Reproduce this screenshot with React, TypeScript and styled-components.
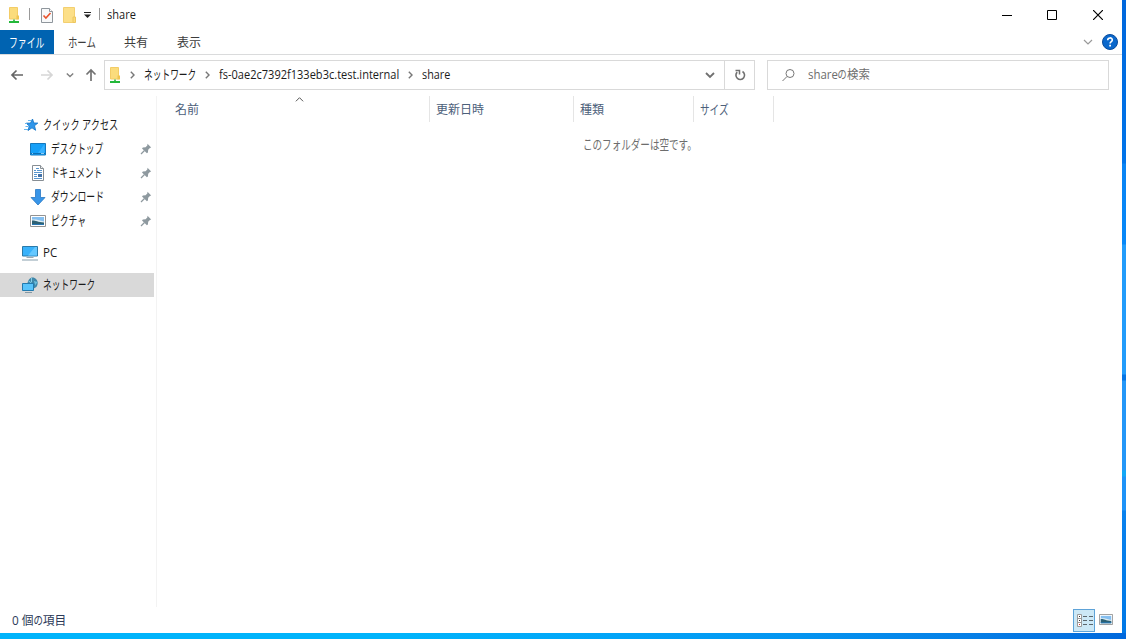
import React from "react";
import styled, { createGlobalStyle } from "styled-components";

const Global = createGlobalStyle`
  * { box-sizing: border-box; }
  body {
    margin: 0;
    overflow: hidden;
    font-family: "Open Sans", "Noto Sans CJK JP", sans-serif;
    font-size: 12px;
    color: #1b1b1b;
  }
  svg { display: block; flex: none; }
`;

const Desktop = styled.div`
  display: grid;
  grid-template: 633px 6px / 1122px 4px;
  width: 1126px;
  height: 639px;
`;

const Window = styled.main`
  display: flex;
  flex-direction: column;
  background: #fff;
  min-width: 0;
`;

const RightEdge = styled.div`
  background: linear-gradient(
    #0067dc 0, #006fe4 100px, #0074ea 163px, #0a84f4 164px, #0788f8 244px,
    #229cfb 245px, #229cfb 374px, #0575e4 375px, #0575e4 380px,
    #2497f8 381px, #2497f8 470px, #12a8f6 471px, #12a8f6 476px,
    #1e93f8 477px, #1e93f8 510px, #0a82ee 511px, #0078e6 100%
  );
`;

const BottomEdge = styled.div`
  grid-column: 1 / 3;
  background: linear-gradient(90deg, #00b4fb 0, #00b4fb 400px, #02a4f8 620px, #0494f0 800px, #067ee6 980px, #0068dc 100%);
`;

const Label = styled.span<{ $w: number; $scale?: number; $color?: string; $size?: number; $rise?: number }>`
  flex: none;
  width: ${(p) => p.$w}px;
  height: 16px;
  line-height: 16px;
  font-size: ${(p) => p.$size ?? 12}px;
  white-space: pre;
  color: ${(p) => p.$color ?? "inherit"};
  transform: translateY(${(p) => p.$rise ?? 0}px) scaleX(${(p) => p.$scale ?? 1});
  transform-origin: left center;
`;

const Kana = styled.span<{ $w: number; $scale: number }>`
  display: inline-block;
  width: ${(p) => p.$w}px;
  transform: scaleX(${(p) => p.$scale});
  transform-origin: left center;
`;

const Spacer = styled.i<{ $w: number }>`
  flex: none;
  width: ${(p) => p.$w}px;
`;

const TitleBar = styled.header`
  display: flex;
  align-items: center;
  height: 30px;
  padding-left: 7px;
  > svg:first-child { margin-top: -1px; }
`;

const Separator = styled.i<{ $gap: string }>`
  width: 1px;
  height: 12px;
  margin: ${(p) => p.$gap};
  margin-top: -2px;
  background: #999;
`;

const WindowButtons = styled.div`
  display: flex;
  margin: -1px 1px 0 auto;
`;

const WindowButton = styled.div`
  display: grid;
  place-items: center;
  width: 46px;
  height: 29px;
`;

const Ribbon = styled.nav`
  display: flex;
  height: 25px;
  border-bottom: 1px solid #dadbdc;
`;

const Tab = styled.div<{ $width: number; $active?: boolean }>`
  display: flex;
  align-items: center;
  width: ${(p) => p.$width}px;
  padding-left: ${(p) => (p.$active ? 9 : 14)}px;
  color: ${(p) => (p.$active ? "#fff" : "#3c3c3c")};
  background: ${(p) => (p.$active ? "#0063b1" : "transparent")};
`;

const RibbonTools = styled.div`
  display: flex;
  align-items: center;
  gap: 9px;
  margin-left: auto;
  padding-right: 4px;
`;

const AddressRow = styled.div`
  display: flex;
  align-items: center;
  height: 41px;
  padding: 0 0 1px 10px;
`;

const NavButtons = styled.div`
  display: flex;
  align-items: center;
  width: 94px;
`;

const AddressBox = styled.div`
  display: flex;
  align-items: center;
  width: 651px;
  height: 30px;
  border: 1px solid #d9d9d9;
  padding-left: 3px;
  > svg:first-child { margin-top: -1px; }
`;

const Crumb = styled.div`
  display: flex;
  align-items: center;
`;

const AddressTools = styled.div`
  display: flex;
  align-items: center;
  margin-left: auto;
  height: 100%;
`;

const Refresh = styled.div`
  display: grid;
  place-items: center;
  width: 30px;
  height: 100%;
  margin-left: 9px;
  border-left: 1px solid #d9d9d9;
`;

const SearchBox = styled.div`
  display: flex;
  align-items: center;
  gap: 12px;
  width: 342px;
  height: 30px;
  margin-left: 12px;
  padding-left: 13px;
  border: 1px solid #d9d9d9;
`;

const Content = styled.div`
  display: flex;
  height: 511px;
`;

const Sidebar = styled.aside`
  width: 157px;
  padding-top: 17px;
  border-right: 1px solid #f3f3f3;
`;

const NavItem = styled.div<{ $indent: number; $selected?: boolean; $before?: number }>`
  display: flex;
  align-items: center;
  gap: 5px;
  width: 154px;
  height: 24px;
  margin-top: ${(p) => p.$before ?? 0}px;
  padding: 0 2px 0 ${(p) => p.$indent}px;
  background: ${(p) => (p.$selected ? "#d9d9d9" : "transparent")};
  > svg:last-child { margin-left: auto; }
`;

const FileArea = styled.section`
  flex: 1;
`;

const ColumnHeads = styled.div`
  display: flex;
  height: 26px;
  padding-left: 12px;
`;

const ColumnHead = styled.div<{ $width: number }>`
  display: flex;
  align-items: center;
  width: ${(p) => p.$width}px;
  padding-left: 6px;
  border-right: 1px solid #e5e5e5;
  color: #4c607a;
  > svg { align-self: flex-start; margin: -1px 0 0 96px; }
`;

const EmptyNote = styled.div`
  display: flex;
  padding: 15px 0 0 426px;
`;

const StatusBar = styled.footer`
  display: flex;
  align-items: center;
  height: 26px;
  padding: 0 6px 0 12px;
`;

const ViewButtons = styled.div`
  display: flex;
  align-items: center;
  margin-left: auto;
`;

const ViewButton = styled.div<{ $on?: boolean }>`
  display: grid;
  place-items: center;
  width: ${(p) => (p.$on ? 22 : 21)}px;
  height: 23px;
  border: 1px solid ${(p) => (p.$on ? "#5ea3d8" : "transparent")};
  background: ${(p) => (p.$on ? "#cce8f6" : "transparent")};
  ${(p) => (p.$on ? "" : "padding-bottom: 1px;")}
`;

const ShareFolderIcon = () => (
  <svg width="14" height="18" viewBox="0 0 14 18">
    <path d="M2.5 1.5h8v11.500h-8z" fill="#fbdc7c" stroke="#f3cc66" />
    <path d="M9.500 9.500h2.500v4H9.500z" fill="#efc552" />
    <path d="M6 13.500h2V15H6z" fill="#4bc35c" />
    <path d="M2 15h10v2H2z" fill="#23b83a" />
  </svg>
);

const PropertiesIcon = () => (
  <svg width="14" height="17" viewBox="0 0 14 17">
    <path d="M1.500 1.500h8l3 3v11h-11z" fill="#f8f9fa" stroke="#8f969c" />
    <path d="M9.500 1.500v3h3" fill="#fff" stroke="#8f969c" />
    <path d="M3.500 8.500l2.400 2.500L10.500 6" fill="none" stroke="#e8532d" strokeWidth="1.600" />
  </svg>
);

const FolderIcon = () => (
  <svg width="14" height="17" viewBox="0 0 14 17">
    <path d="M.5.5h11v15H.5z" fill="#fcdf88" stroke="#f3cf70" />
    <path d="M10 10h2.500v5.500H10z" fill="#fbdc7c" stroke="#edc65f" />
  </svg>
);

const Chevron = ({ dir, size = 8, color = "#777", weight = 1.4 }: { dir: "down" | "right" | "up"; size?: number; color?: string; weight?: number }) => {
  const d = { down: "M1 3l4 4 4-4", right: "M3.500 1l4 4-4 4", up: "M1 7l4-4 4 4" }[dir];
  return (
    <svg width={size} height={size} viewBox="0 0 10 10">
      <path d={d} fill="none" stroke={color} strokeWidth={(weight * 10) / size} />
    </svg>
  );
};

const Arrow = ({ dir, color }: { dir: "left" | "right" | "up"; color: string }) => {
  const d = { left: "M13 7H2M6.500 2.500L2 7l4.500 4.500", right: "M1 7h11M7.500 2.500L12 7l-4.500 4.500", up: "M7 13V2M2.500 6.500L7 2l4.500 4.500" }[dir];
  return (
    <svg width="14" height="14" viewBox="0 0 14 14">
      <path d={d} fill="none" stroke={color} strokeWidth="1.700" />
    </svg>
  );
};

const StarIcon = () => (
  <svg width="14" height="14" viewBox="0 0 14 14">
    <path d="M8.500 1l1.300 4 4 .1-3.300 2.600 1.100 4.600-3.600-2.500-4 2.700 1.300-4.500L2.200 5.200l4.300-.1z" fill="#2f96ea" stroke="#1878c9" strokeWidth=".9" />
    <path d="M4 2.500h3M1 5.500h2M1.500 8.500h3M0 11.500h4" stroke="#67b5ee" />
  </svg>
);

const DesktopIcon = () => (
  <svg width="16" height="13" viewBox="0 0 16 13">
    <path d="M.5.5h15v11.500H.5z" fill="#16a0f8" stroke="#1578bd" />
    <path d="M8 10L14.500 1v9z" fill="#37b1ff" />
    <path d="M1 10.500h14" stroke="#0c70b5" />
    <path d="M2 10.500h1M11 10.500h3" stroke="#8fcdf3" />
  </svg>
);

const DocumentIcon = () => (
  <svg width="16" height="16" viewBox="0 0 16 16">
    <path d="M2.500.5h8l3 3v12h-11z" fill="#fff" stroke="#878e94" />
    <path d="M10.500.5v3h3" fill="#eee" stroke="#878e94" />
    <path d="M6 3.500h3M4 5.500h2M7 5.500h5M4 7.500h8M4 9.500h3M4 11.500h3M4 13.500h8" stroke="#5795cf" />
    <path d="M8 9h4v3H8z" fill="#4472a8" />
  </svg>
);

const DownloadIcon = () => (
  <svg width="16" height="17" viewBox="0 0 16 17">
    <path d="M5.500.5h5v8H15l-7 7.500-7-7.500h4.500z" fill="#3895e8" stroke="#2878c4" strokeWidth=".8" />
  </svg>
);

const PictureIcon = ({ width = 16, height = 12 }: { width?: number; height?: number }) => (
  <svg width={width} height={height} viewBox="0 0 16 12" preserveAspectRatio="none">
    <path d="M.5.5h15v11H.5z" fill="#fff" stroke="#929292" />
    <path d="M2 2h12v8H2z" fill="#85bff0" />
    <path d="M2 4.500h4l8 2V10H2z" fill="#dfedf2" />
    <path d="M2 5.500c3-.5 5 1.500 12 2v2.500H2z" fill="#2d6174" />
    <path d="M2 9h12v1H2z" fill="#2977b3" />
  </svg>
);

const PinIcon = () => (
  <svg width="12" height="12" viewBox="0 0 12 12">
    <path d="M7.500.8l3.700 3.700-1.300.5-1.700 1.700-.3 2.800-1 .8L2 5.400l.9-1 2.700-.2L7.300 2.500z" fill="#8e999f" />
    <path d="M4.500 7.500L1 11" stroke="#8e999f" strokeWidth="1.300" />
  </svg>
);

const PcIcon = () => (
  <svg width="16" height="16" viewBox="0 0 16 16">
    <path d="M.5 1.500h15v9.500H.5z" fill="#38b2fb" stroke="#2b7aa9" />
    <path d="M6 10.500L13 2h2v8.500z" fill="#65c8ff" />
    <path d="M4.500 12.500h7" stroke="#9baab3" />
    <path d="M0 15h16" stroke="#87a0ad" />
  </svg>
);

const NetworkIcon = () => (
  <svg width="16" height="16" viewBox="0 0 16 16">
    <path d="M10.500.5c3 0 5.200 2.500 5.200 5.500s-1.700 5-4.200 5.500L5.500 6C6 3 8 .5 10.500.5z" fill="#3f86a8" />
    <path d="M10.500.5l1.500 3.500 3.500 1-2 3 .5 2" fill="#69bede" />
    <path d="M9.500 1v4M6.500 4l3 2" stroke="#83cfe9" />
    <path d="M.5 6.500h11V13.500H.5z" fill="#59c4fb" stroke="#237aae" />
    <path d="M3 15.500h7" stroke="#8499a6" />
  </svg>
);

const DetailsIcon = () => (
  <svg width="17" height="15" viewBox="0 0 17 15">
    <path d="M1.500 1.500h4v12h-4zM1.500 5.500h4M1.500 9.500h4" fill="#fff" stroke="#9b9b9b" />
    <path d="M3 3.500h1M3 7.500h1" stroke="#333" />
    <path d="M3 11.500h1" stroke="#d33" />
    <path d="M7 3.500h4M13 3.500h4M7 7.500h4M13 7.500h4M7 11.500h4M13 11.500h4" stroke="#5b666c" />
  </svg>
);

const quickAccess = [
  { text: "デスクトップ", width: 53, scale: 0.67, icon: <DesktopIcon /> },
  { text: "ドキュメント", width: 51, scale: 0.655, icon: <DocumentIcon /> },
  { text: "ダウンロード", width: 53, scale: 0.68, icon: <DownloadIcon /> },
  { text: "ピクチャ", width: 35, scale: 0.675, icon: <PictureIcon /> },
];

export default function App() {
  return (
    <>
      <Global />
      <Desktop>
        <Window>
          <TitleBar>
            <ShareFolderIcon />
            <Separator $gap="0 10px 0 8px" />
            <PropertiesIcon />
            <Spacer $w={9} />
            <FolderIcon />
            <Spacer $w={7} />
            <svg width="7" height="6" viewBox="0 0 7 6">
              <path d="M0 .5h7" stroke="#222" />
              <path d="M0 2.500h7L3.500 6z" fill="#222" />
            </svg>
            <Separator $gap="0 7px 0 8px" />
            <Label $w={30} $scale={0.92}>share</Label>
            <WindowButtons>
              <WindowButton>
                <svg width="12" height="10"><path d="M2 5.500h10" stroke="#000" /></svg>
              </WindowButton>
              <WindowButton>
                <svg width="10" height="10"><path d="M.5.5h9v9h-9z" fill="none" stroke="#000" /></svg>
              </WindowButton>
              <WindowButton>
                <svg width="10" height="10"><path d="M0 0l10 10M10 0L0 10" stroke="#000" strokeWidth="1.200" /></svg>
              </WindowButton>
            </WindowButtons>
          </TitleBar>

          <Ribbon>
            <Tab $width={54} $active><Label $w={36} $size={13} $scale={0.68}>ファイル</Label></Tab>
            <Tab $width={56}><Label $w={28} $size={13} $scale={0.72}>ホーム</Label></Tab>
            <Tab $width={53}><Label $w={24} $rise={1}>共有</Label></Tab>
            <Tab $width={53}><Label $w={24} $rise={1}>表示</Label></Tab>
            <RibbonTools>
              <Chevron dir="down" size={10} color="#999" weight={1.2} />
              <svg width="16" height="16" viewBox="0 0 16 16">
                <circle cx="8" cy="8" r="7.500" fill="#0b68cc" stroke="#0a4c9c" />
                <path d="M5.700 6.200c0-3 4.600-3 4.600-.2 0 1.600-2.200 1.700-2.200 3.500" fill="none" stroke="#fff" strokeWidth="1.600" />
                <path d="M7.200 10.800H9v1.700H7.200z" fill="#fff" />
              </svg>
            </RibbonTools>
          </Ribbon>

          <AddressRow>
            <NavButtons>
              <Arrow dir="left" color="#666" />
              <Spacer $w={16} />
              <Arrow dir="right" color="#d6d6d6" />
              <Spacer $w={12} />
              <Chevron dir="down" size={8} color="#808080" />
              <Spacer $w={10} />
              <Arrow dir="up" color="#737373" />
            </NavButtons>
            <AddressBox>
              <ShareFolderIcon />
              <Crumb>
                <Spacer $w={6} />
                <Chevron dir="right" />
                <Spacer $w={8} />
                <Label $w={53} $size={13} $scale={0.67} $rise={-1}>ネットワーク</Label>
              </Crumb>
              <Crumb>
                <Spacer $w={6} />
                <Chevron dir="right" />
                <Spacer $w={8} />
                <Label $w={180} $scale={0.92}>fs-0ae2c7392f133eb3c.test.internal</Label>
              </Crumb>
              <Crumb>
                <Spacer $w={7} />
                <Chevron dir="right" />
                <Spacer $w={8} />
                <Label $w={30} $scale={0.9}>share</Label>
              </Crumb>
              <AddressTools>
                <Chevron dir="down" size={10} color="#707070" weight={1.8} />
                <Refresh>
                  <svg width="12" height="12" viewBox="0 0 12 12">
                    <path d="M8.500 2.500A4.300 4.300 0 1 1 3.200 3.100" fill="none" stroke="#707070" strokeWidth="1.600" />
                    <path d="M1.500 1.500h4v4" fill="none" stroke="#707070" strokeWidth="1.500" />
                  </svg>
                </Refresh>
              </AddressTools>
            </AddressBox>
            <SearchBox>
              <svg width="15" height="14" viewBox="0 0 15 14">
                <circle cx="9" cy="5.500" r="4" fill="none" stroke="#777" />
                <path d="M6 8.500L1.500 13" stroke="#777" />
              </svg>
              <Label $w={62} $scale={0.955} $color="#6d6d6d">share<Kana $w={9.5} $scale={0.8}>の</Kana>検索</Label>
            </SearchBox>
          </AddressRow>

          <Content>
            <Sidebar>
              <NavItem $indent={24}>
                <StarIcon />
                <Label $w={76} $size={13} $scale={0.705} $rise={-1}>クイック アクセス</Label>
              </NavItem>
              {quickAccess.map((q) => (
                <NavItem key={q.text} $indent={30}>
                  {q.icon}
                  <Label $w={q.width} $size={13} $scale={q.scale} $rise={-1}>{q.text}</Label>
                  <PinIcon />
                </NavItem>
              ))}
              <NavItem $indent={22} $before={8}>
                <PcIcon />
                <Label $w={15} $scale={0.96}>PC</Label>
              </NavItem>
              <NavItem $indent={22} $before={8} $selected>
                <NetworkIcon />
                <Label $w={53} $size={13} $scale={0.67} $rise={-1}>ネットワーク</Label>
              </NavItem>
            </Sidebar>
            <FileArea>
              <ColumnHeads>
                <ColumnHead $width={261}>
                  <Label $w={24} $rise={1}>名前</Label>
                  <Chevron dir="up" size={9} color="#555" weight={1} />
                </ColumnHead>
                <ColumnHead $width={144}><Label $w={48} $rise={1}>更新日時</Label></ColumnHead>
                <ColumnHead $width={120}><Label $w={24} $rise={1}>種類</Label></ColumnHead>
                <ColumnHead $width={80}><Label $w={29} $size={13} $scale={0.74}>サイズ</Label></ColumnHead>
              </ColumnHeads>
              <EmptyNote>
                <Label $w={112} $size={13} $scale={0.735} $rise={-1} $color="#6d6d6d">このフォルダーは空です。</Label>
              </EmptyNote>
            </FileArea>
          </Content>

          <StatusBar>
            <Label $w={56} $scale={0.98} $rise={1} $color="#2c3a58">0 個<Kana $w={9.5} $scale={0.8}>の</Kana>項目</Label>
            <ViewButtons>
              <ViewButton $on><DetailsIcon /></ViewButton>
              <ViewButton><PictureIcon width={14} height={11} /></ViewButton>
            </ViewButtons>
          </StatusBar>
        </Window>
        <RightEdge />
        <BottomEdge />
      </Desktop>
    </>
  );
}
